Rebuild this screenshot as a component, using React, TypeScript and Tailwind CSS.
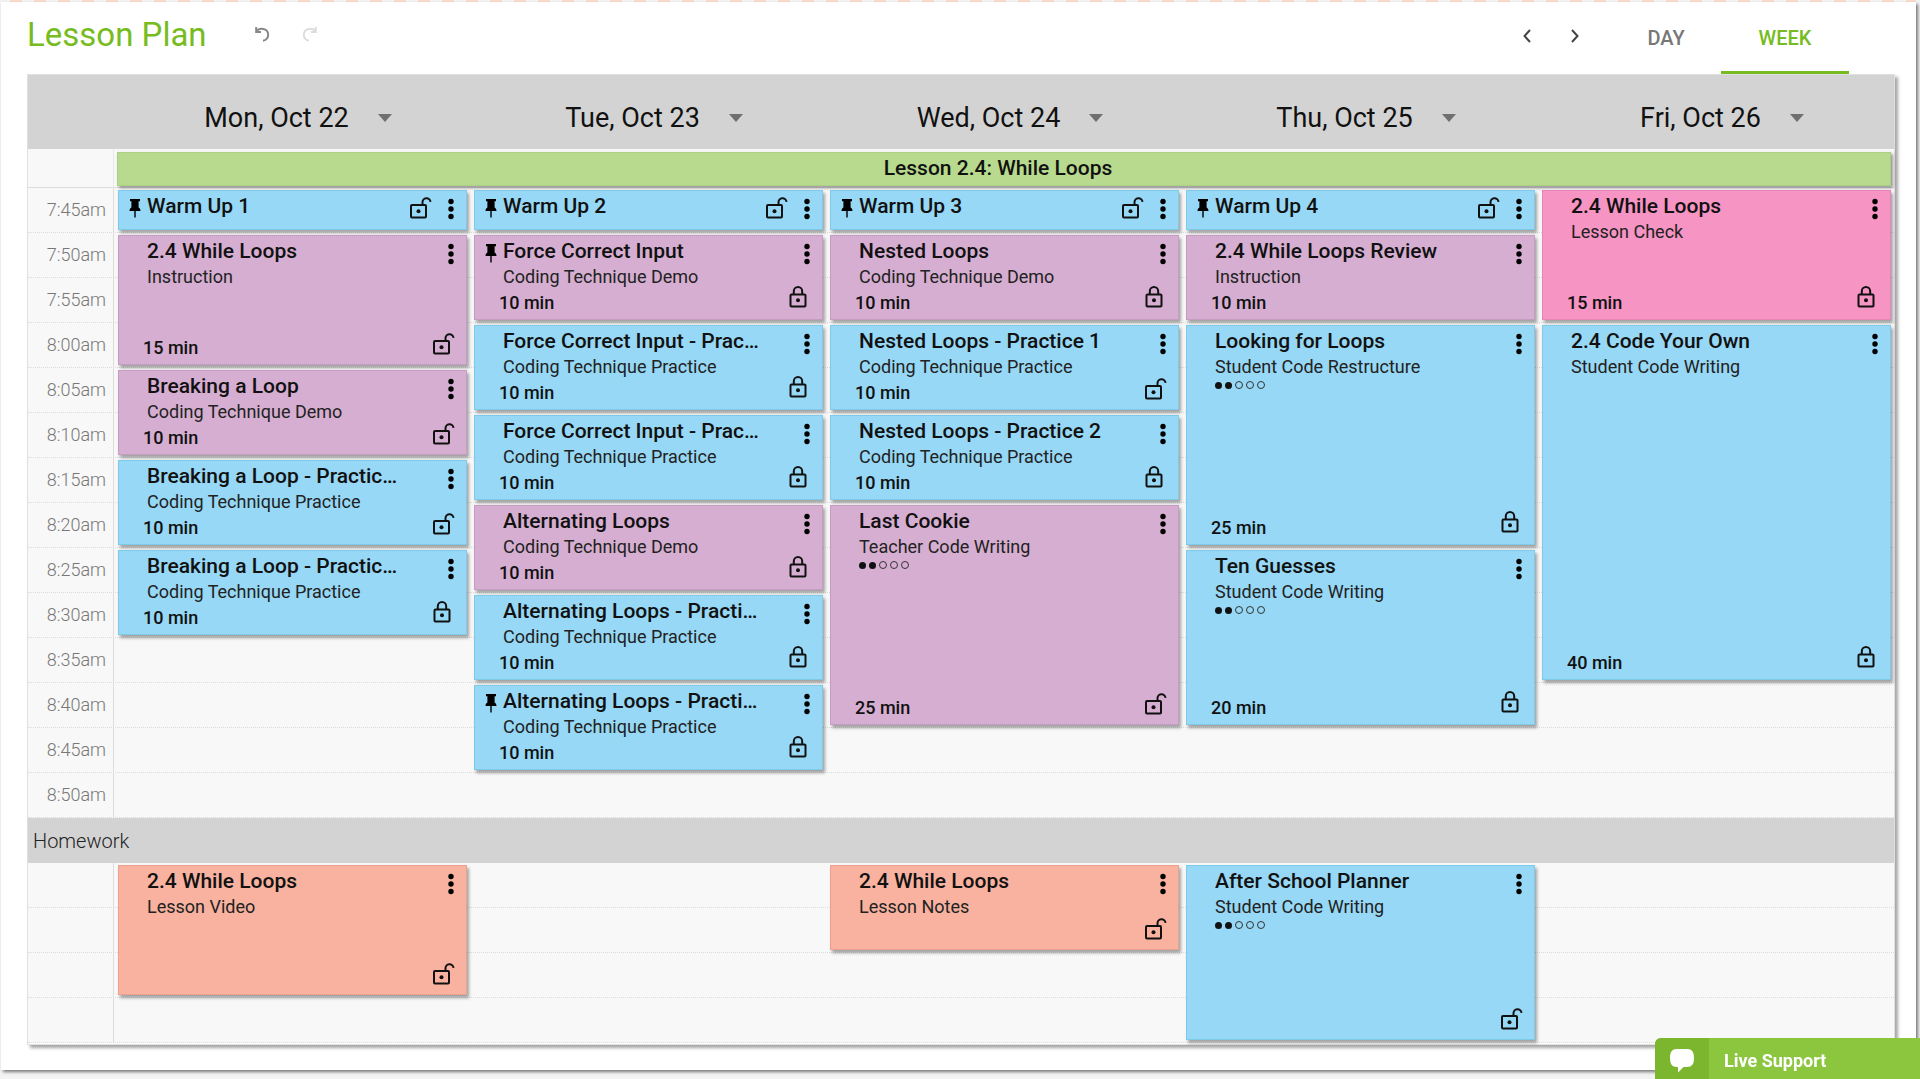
import { useState } from "react";

type Kind = "practice" | "instruction" | "check" | "homework";

type Item = {
  day: number;
  row: number;
  span: number;
  kind: Kind;
  title: string;
  sub?: string;
  time?: string;
  lock: "open" | "closed" | null;
  pinned?: boolean;
  dots?: boolean;
};

const kindClass: Record<Kind, string> = {
  practice: "bg-[#90d6f5]/95 border-[#7ecbe9]",
  instruction: "bg-[#d4aacf]/95 border-[#c79cc3]",
  check: "bg-[#f68ec1]/95 border-[#ea84b5]",
  homework: "bg-[#f8ae9a]/95 border-[#eaa18d]",
};

const days = ["Mon, Oct 22", "Tue, Oct 23", "Wed, Oct 24", "Thu, Oct 25", "Fri, Oct 26"];

const times = [
  "7:45am", "7:50am", "7:55am", "8:00am", "8:05am", "8:10am", "8:15am",
  "8:20am", "8:25am", "8:30am", "8:35am", "8:40am", "8:45am", "8:50am",
];

const lessons: Item[] = [
  { day: 0, row: 0, span: 1, kind: "practice", title: "Warm Up 1", lock: "open", pinned: true },
  { day: 0, row: 1, span: 3, kind: "instruction", title: "2.4 While Loops", sub: "Instruction", time: "15 min", lock: "open" },
  { day: 0, row: 4, span: 2, kind: "instruction", title: "Breaking a Loop", sub: "Coding Technique Demo", time: "10 min", lock: "open" },
  { day: 0, row: 6, span: 2, kind: "practice", title: "Breaking a Loop - Practic…", sub: "Coding Technique Practice", time: "10 min", lock: "open" },
  { day: 0, row: 8, span: 2, kind: "practice", title: "Breaking a Loop - Practic…", sub: "Coding Technique Practice", time: "10 min", lock: "closed" },

  { day: 1, row: 0, span: 1, kind: "practice", title: "Warm Up 2", lock: "open", pinned: true },
  { day: 1, row: 1, span: 2, kind: "instruction", title: "Force Correct Input", sub: "Coding Technique Demo", time: "10 min", lock: "closed", pinned: true },
  { day: 1, row: 3, span: 2, kind: "practice", title: "Force Correct Input - Prac…", sub: "Coding Technique Practice", time: "10 min", lock: "closed" },
  { day: 1, row: 5, span: 2, kind: "practice", title: "Force Correct Input - Prac…", sub: "Coding Technique Practice", time: "10 min", lock: "closed" },
  { day: 1, row: 7, span: 2, kind: "instruction", title: "Alternating Loops", sub: "Coding Technique Demo", time: "10 min", lock: "closed" },
  { day: 1, row: 9, span: 2, kind: "practice", title: "Alternating Loops - Practi…", sub: "Coding Technique Practice", time: "10 min", lock: "closed" },
  { day: 1, row: 11, span: 2, kind: "practice", title: "Alternating Loops - Practi…", sub: "Coding Technique Practice", time: "10 min", lock: "closed", pinned: true },

  { day: 2, row: 0, span: 1, kind: "practice", title: "Warm Up 3", lock: "open", pinned: true },
  { day: 2, row: 1, span: 2, kind: "instruction", title: "Nested Loops", sub: "Coding Technique Demo", time: "10 min", lock: "closed" },
  { day: 2, row: 3, span: 2, kind: "practice", title: "Nested Loops - Practice 1", sub: "Coding Technique Practice", time: "10 min", lock: "open" },
  { day: 2, row: 5, span: 2, kind: "practice", title: "Nested Loops - Practice 2", sub: "Coding Technique Practice", time: "10 min", lock: "closed" },
  { day: 2, row: 7, span: 5, kind: "instruction", title: "Last Cookie", sub: "Teacher Code Writing", time: "25 min", lock: "open", dots: true },

  { day: 3, row: 0, span: 1, kind: "practice", title: "Warm Up 4", lock: "open", pinned: true },
  { day: 3, row: 1, span: 2, kind: "instruction", title: "2.4 While Loops Review", sub: "Instruction", time: "10 min", lock: null },
  { day: 3, row: 3, span: 5, kind: "practice", title: "Looking for Loops", sub: "Student Code Restructure", time: "25 min", lock: "closed", dots: true },
  { day: 3, row: 8, span: 4, kind: "practice", title: "Ten Guesses", sub: "Student Code Writing", time: "20 min", lock: "closed", dots: true },

  { day: 4, row: 0, span: 3, kind: "check", title: "2.4 While Loops", sub: "Lesson Check", time: "15 min", lock: "closed" },
  { day: 4, row: 3, span: 8, kind: "practice", title: "2.4 Code Your Own", sub: "Student Code Writing", time: "40 min", lock: "closed" },
];

const homework: Item[] = [
  { day: 0, row: 0, span: 3, kind: "homework", title: "2.4 While Loops", sub: "Lesson Video", lock: "open" },
  { day: 2, row: 0, span: 2, kind: "homework", title: "2.4 While Loops", sub: "Lesson Notes", lock: "open" },
  { day: 3, row: 0, span: 4, kind: "practice", title: "After School Planner", sub: "Student Code Writing", lock: "open", dots: true },
];

function OpenLock() {
  return (
    <svg width="22" height="22" viewBox="0 0 22 22" fill="none" stroke="#111" strokeWidth="2">
      <rect x="1" y="8" width="15" height="12.5" rx="1" />
      <path d="M12.500 8V5.500a4 4 0 0 1 8-.6" />
      <circle cx="8.500" cy="14.200" r="2" fill="#111" stroke="none" />
    </svg>
  );
}

function ClosedLock() {
  return (
    <svg width="18" height="22" viewBox="0 0 18 22" fill="none" stroke="#111" strokeWidth="2">
      <rect x="1.500" y="8.500" width="15" height="12" rx="1" />
      <path d="M4.800 8.500V5.300a4.200 4.200 0 0 1 8.400 0v3.200" />
      <circle cx="9" cy="14.300" r="2" fill="#111" stroke="none" />
    </svg>
  );
}

function Pin() {
  return (
    <svg width="12" height="19" viewBox="0 0 12 19" fill="#000">
      <path d="M1 0h10v2.200H9.600v6.300c1 .5 1.900 1.700 1.900 3.500H6.700V18l-.7 1-.7-1v-6H.5c0-1.800.9-3 1.900-3.500V2.200H1z" />
    </svg>
  );
}

function Dots() {
  return (
    <div className="flex items-center gap-[3px] pt-[3px]" role="img" aria-label="Difficulty 2 of 5">
      {[1, 2, 3, 4, 5].map((n) => (
        <span key={n} className={`rounded-full ${n <= 2 ? "size-[7px] bg-[#111]" : "size-2 border border-[#333]"}`} />
      ))}
    </div>
  );
}

function Card({ item }: { item: Item }) {
  const single = item.span === 1;
  const lockIcon = item.lock === "open" ? <OpenLock /> : <ClosedLock />;
  return (
    <article
      className={`z-10 mt-[2px] mr-[3px] mb-[3px] ml-1 flex min-w-0 flex-col justify-between border shadow-[2px_3px_3px_rgba(0,0,0,0.35)] ${kindClass[item.kind]}`}
      style={{ gridColumn: item.day + 2, gridRow: `${item.row + 1} / span ${item.span}` }}
    >
      <div className="flex items-start">
        <div className="flex w-7 shrink-0 justify-end pt-2 pr-[6px]">{item.pinned && <Pin />}</div>
        <div className="min-w-0 flex-1">
          <h3 className="truncate text-[21px] leading-[30px] font-medium text-[#111]">{item.title}</h3>
          {item.sub && <p className="truncate text-lg leading-[22px] text-[#222]">{item.sub}</p>}
          {item.dots && <Dots />}
        </div>
        {single && (
          <button aria-label="Unlock" className="mr-[15px] pt-[6px]">{lockIcon}</button>
        )}
        <button aria-label="More options" className="mr-[11px] pt-[7px]">
          <svg width="8" height="22" viewBox="0 0 8 22" fill="#000">
            <circle cx="4" cy="3.500" r="2.700" />
            <circle cx="4" cy="11" r="2.700" />
            <circle cx="4" cy="18.500" r="2.700" />
          </svg>
        </button>
      </div>
      {!single && (
        <div className="-mt-3 flex items-end justify-between pr-[11px] pl-6">
          <p className="pb-1 text-lg leading-6 font-medium text-[#111]">{item.time}</p>
          {item.lock && (
            <button
              aria-label={item.lock === "open" ? "Lock" : "Unlock"}
              className={item.lock === "open" ? "pb-[9px]" : "mr-1 pb-[11px]"}
            >
              {lockIcon}
            </button>
          )}
        </div>
      )}
    </article>
  );
}

function Schedule({ labels, items }: { labels: string[]; items: Item[] }) {
  return (
    <div className="grid auto-rows-[45px] grid-cols-[86px_repeat(5,minmax(0,1fr))] bg-[#f8f8f8]">
      {labels.map((label, i) => (
        <div
          key={i}
          className="col-span-full col-start-1 border-b border-dotted border-[#dcdcdc]"
          style={{ gridRow: i + 1 }}
        >
          <div className="flex h-11 w-[86px] items-center justify-end border-r border-[#dcdcdc] pr-[7px] text-lg font-light text-[#777]">
            {label}
          </div>
        </div>
      ))}
      {items.map((item, i) => (
        <Card key={i} item={item} />
      ))}
    </div>
  );
}

export default function App() {
  const [view, setView] = useState("WEEK");

  return (
    <div className="min-h-screen bg-[#f3f3f3] pr-1 pb-[7px] pl-px font-[Roboto,sans-serif]">
      <div className="h-[2px] bg-[repeating-linear-gradient(90deg,#f3f3f3_0,#f3f3f3_9px,#fbdccb_9px,#fbdccb_21px,#f3f3f3_21px,#f3f3f3_24px)]" />
      <main className="bg-white pr-[21px] pb-[25px] pl-[26px] shadow-[2px_2px_3px_rgba(0,0,0,0.5)]">
        <header className="flex h-[72px] items-start">
          <h1 className="pt-3 text-[33px] leading-[42px] text-[#76bc21]">Lesson Plan</h1>
          <div className="flex gap-[30px] pt-6 pl-12">
            <button aria-label="Undo">
              <svg width="16" height="17" viewBox="0 0 16 17" fill="none" stroke="#888" strokeWidth="2">
                <path d="M1.200 1v5H6M1.500 5.500C4 1.500 13 1.500 13.200 8.800c0 3.200-2.200 5.400-5.200 6" />
              </svg>
            </button>
            <button aria-label="Redo">
              <svg width="16" height="17" viewBox="0 0 16 17" fill="none" stroke="#ddd" strokeWidth="2">
                <path d="M14.800 1v5H10M14.500 5.500C12 1.500 3 1.500 2.800 8.800c0 3.200 2.200 5.400 5.200 6" />
              </svg>
            </button>
          </div>
          <div className="ml-auto flex gap-10 pt-[27px] pr-8">
            <button aria-label="Previous week">
              <svg width="8" height="14" viewBox="0 0 8 14" fill="none" stroke="#444" strokeWidth="2">
                <path d="M7 1 1.500 7 7 13" />
              </svg>
            </button>
            <button aria-label="Next week">
              <svg width="8" height="14" viewBox="0 0 8 14" fill="none" stroke="#444" strokeWidth="2">
                <path d="M1 1l5.500 6L1 13" />
              </svg>
            </button>
          </div>
          <nav className="mr-[46px] flex self-stretch">
            {["DAY", "WEEK"].map((tab) => (
              <button
                key={tab}
                onClick={() => setView(tab)}
                className={`border-b-3 pt-[2px] text-xl font-medium ${tab === "DAY" ? "w-[110px]" : "w-32"} ${
                  view === tab ? "border-[#76bc21] text-[#76bc21]" : "border-transparent text-[#777]"
                }`}
              >
                {tab}
              </button>
            ))}
          </nav>
        </header>

        <section className="border border-[#e0e0e0] bg-white pb-px shadow-[3px_3px_3px_rgba(0,0,0,0.35)]">
          <div className="grid h-[74px] grid-cols-[86px_repeat(5,minmax(0,1fr))] bg-[#d3d3d3]">
            <span />
            {days.map((day) => (
              <button key={day} className="flex items-center justify-center gap-[29px] pt-3 pl-3 text-[27px] text-[#111]">
                {day}
                <svg width="14" height="8" viewBox="0 0 14 8" fill="#707070">
                  <path d="M0 0h14L7 8z" />
                </svg>
              </button>
            ))}
          </div>
          <div className="grid h-[39px] grid-cols-[86px_minmax(0,1fr)] border-b border-[#dcdcdc] bg-[#f8f8f8]">
            <span className="border-r border-[#e8e8e8]" />
            <h2 className="m-[3px] flex items-center justify-center border border-[#acd082] bg-[#b8da8e] pr-3 text-[21px] font-medium text-[#111] shadow-[2px_2px_3px_rgba(0,0,0,0.4)]">
              Lesson 2.4: While Loops
            </h2>
          </div>
          <Schedule labels={times} items={lessons} />
          <h2 className="flex h-[45px] items-center bg-[#d3d3d3] pl-[5px] text-xl font-light text-[#222]">Homework</h2>
          <Schedule labels={["", "", "", ""]} items={homework} />
        </section>
      </main>

      <button className="fixed right-0 bottom-0 z-20 flex h-[41px] w-[265px] items-stretch overflow-hidden rounded-tl-md bg-[#8bc63e] text-lg font-bold text-white">
        <span className="flex w-[54px] items-center justify-center bg-[#7cb62f] pt-1">
          <svg width="24" height="24" viewBox="0 0 24 24" fill="#fff">
            <path d="M7 0h10c5 0 7 3 7 9s-2 9-7 9h-3.500L8 23.500V18H7c-5 0-7-3-7-9s2-9 7-9z" />
          </svg>
        </span>
        <span className="flex items-center pt-1 pl-[15px]">Live Support</span>
      </button>
    </div>
  );
}
